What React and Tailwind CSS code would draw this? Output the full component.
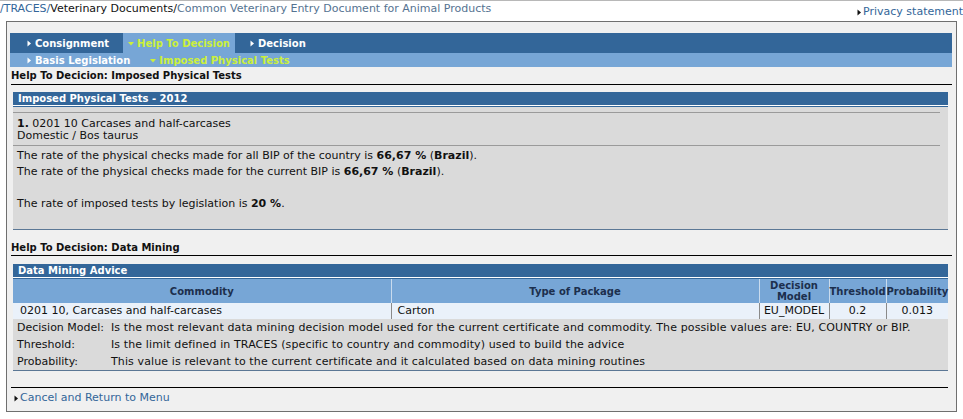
import { Fragment } from "react";

function Tri({ down, color = "#ffffff" }) {
  return (
    <svg width="6" height="7" viewBox="0 0 6 7" className="inline-block shrink-0">
      {down ? <polygon points="0,2 6,2 3,5.5" fill={color} /> : <polygon points="1.5,0.5 5,3.5 1.5,6.5" fill={color} />}
    </svg>
  );
}

function NavItem({ label, active, down }) {
  return (
    <div className={"flex items-center gap-[3px] px-[5px] h-full " + (active ? "bg-[#77a6d6] text-[#ccf03a]" : "text-white")}>
      <Tri down={down} color={active ? "#ccf03a" : "#ffffff"} />
      <span>{label}</span>
    </div>
  );
}

function PanelHeader({ title }) {
  return (
    <div>
      <div className="bg-[#336699] h-[13px] leading-[13px] px-[5px] text-white font-bold text-[10px]">{title}</div>
      <div className="h-[1px] bg-white" />
      <div className="h-[1px] bg-[#336699]" />
    </div>
  );
}

const rows = [
  ["Decision Model:", "Is the most relevant data mining decision model used for the current certificate and commodity. The possible values are: EU, COUNTRY or BIP."],
  ["Threshold:", "Is the limit defined in TRACES (specific to country and commodity) used to build the advice"],
  ["Probability:", "This value is relevant to the current certificate and it calculated based on data mining routines"],
];

export default function App() {
  return (
    <div className="w-[963px] h-[419px] bg-white font-['DejaVu_Sans',Verdana,sans-serif] text-[11px] text-[#111] overflow-hidden border-t border-t-[#b8b8b8]">
      <div className="flex justify-between h-[20px]">
        <div className="leading-[14px] pt-[1px] whitespace-nowrap">
          <span className="text-[#336699]">/TRACES/</span>
          <span className="text-[#111]">Veterinary Documents/</span>
          <span className="text-[#557391]">Common Veterinary Entry Document for Animal Products</span>
        </div>
        <div className="flex items-center gap-[1px] pt-[5px] leading-[12px] text-[#336699] h-fit whitespace-nowrap">
          <Tri color="#111" />
          <span>Privacy statement</span>
        </div>
      </div>

      <div className="ml-[6px] w-[951px] h-[391px] border border-[#6f6f6f] bg-[#f0f0f0] pt-[11px]">
        <div className="ml-[3px] mr-[4px] font-bold text-[10px]">
          <div className="h-[20px] bg-[#336699] flex items-stretch gap-[9px] pl-[11px]">
            <NavItem label="Consignment" />
            <NavItem label="Help To Decision" active down />
            <NavItem label="Decision" />
          </div>
          <div className="h-[14px] bg-[#77a6d6] flex items-stretch gap-[10px] pl-[11px] leading-[15px]">
            <NavItem label="Basis Legislation" />
            <div className="flex items-center gap-[3px] px-[5px] text-[#ccf03a]">
              <Tri down color="#ccf03a" />
              <span>Imposed Physical Tests</span>
            </div>
          </div>
        </div>

        <div className="ml-[4px] mr-[4px] mt-[1px] h-[17px] leading-[16px] text-[10px] font-bold border-b border-b-black">Help To Decicion: Imposed Physical Tests</div>

        <div className="ml-[6px] mr-[8px] mt-[7px]">
          <PanelHeader title="Imposed Physical Tests - 2012" />
          <div className="bg-[#dadada] border-b border-b-[#5b7795] pt-[5px] pb-[17px]">
            <div className="border-t border-t-[#9a9a9a] border-b border-b-[#9a9a9a] pl-[4px] pt-[5px] pb-[3px] leading-[12px] mr-[8px]">
              <div><span className="font-bold">1.</span> 0201 10 Carcases and half-carcases</div>
              <div>Domestic / Bos taurus</div>
            </div>
            <div className="pl-[4px] pt-[2px] leading-[16px]">
              <div>The rate of the physical checks made for all BIP of the country is <b>66,67 %</b> (<b>Brazil</b>).</div>
              <div>The rate of the physical checks made for the current BIP is <b>66,67 %</b> (<b>Brazil</b>).</div>
              <div>&nbsp;</div>
              <div>The rate of imposed tests by legislation is <b>20 %</b>.</div>
            </div>
          </div>
        </div>

        <div className="ml-[4px] mr-[4px] mt-[11px] h-[15px] leading-[14px] text-[10px] font-bold border-b border-b-black">Help To Decision: Data Mining</div>

        <div className="ml-[6px] mr-[8px] mt-[8px]">
          <PanelHeader title="Data Mining Advice" />
          <table className="w-full table-fixed border-collapse text-[11px]">
            <colgroup>
              <col className="w-[378px]" />
              <col className="w-[368px]" />
              <col className="w-[70px]" />
              <col className="w-[57px]" />
              <col className="w-[62px]" />
            </colgroup>
            <thead>
              <tr className="bg-[#77a6d6] text-[#1c2f4d] text-[10px] h-[24px] leading-[11px]">
                <th className="font-bold p-0">Commodity</th>
                <th className="font-bold p-0 border-l border-l-[#c9dbee]">Type of Package</th>
                <th className="font-bold p-0 border-l border-l-[#c9dbee]">Decision<br />Model</th>
                <th className="font-bold p-0 border-l border-l-[#c9dbee] whitespace-nowrap">Threshold</th>
                <th className="font-bold p-0 border-l border-l-[#c9dbee] whitespace-nowrap">Probability</th>
              </tr>
            </thead>
            <tbody>
              <tr className="bg-[#eaf1fa] h-[16px] leading-[16px]">
                <td className="pl-[7px] p-0">0201 10, Carcases and half-carcases</td>
                <td className="pl-[6px] p-0 border-l border-l-[#8a8a8a]">Carton</td>
                <td className="p-0 text-center border-l border-l-[#8a8a8a]">EU_MODEL</td>
                <td className="p-0 text-center border-l border-l-[#8a8a8a]">0.2</td>
                <td className="p-0 text-center border-l border-l-[#8a8a8a]">0.013</td>
              </tr>
            </tbody>
          </table>
          <div className="bg-[#dadada] border-b border-b-[#5b7795] grid grid-cols-[94px_1fr] leading-[17px] pl-[4px] text-[#111]">
            {rows.map(([k, v]) => (
              <Fragment key={k}>
                <div className="whitespace-nowrap">{k}</div>
                <div className="whitespace-nowrap tracking-[0.12px]">{v}</div>
              </Fragment>
            ))}
          </div>
        </div>

        <div className="ml-[4px] mr-[8px] mt-[16px] border-t border-t-black h-[21px] flex items-center gap-[1px] pl-[2px] text-[#336699]">
          <Tri color="#111" />
          <span>Cancel and Return to Menu</span>
        </div>
      </div>
    </div>
  );
}
